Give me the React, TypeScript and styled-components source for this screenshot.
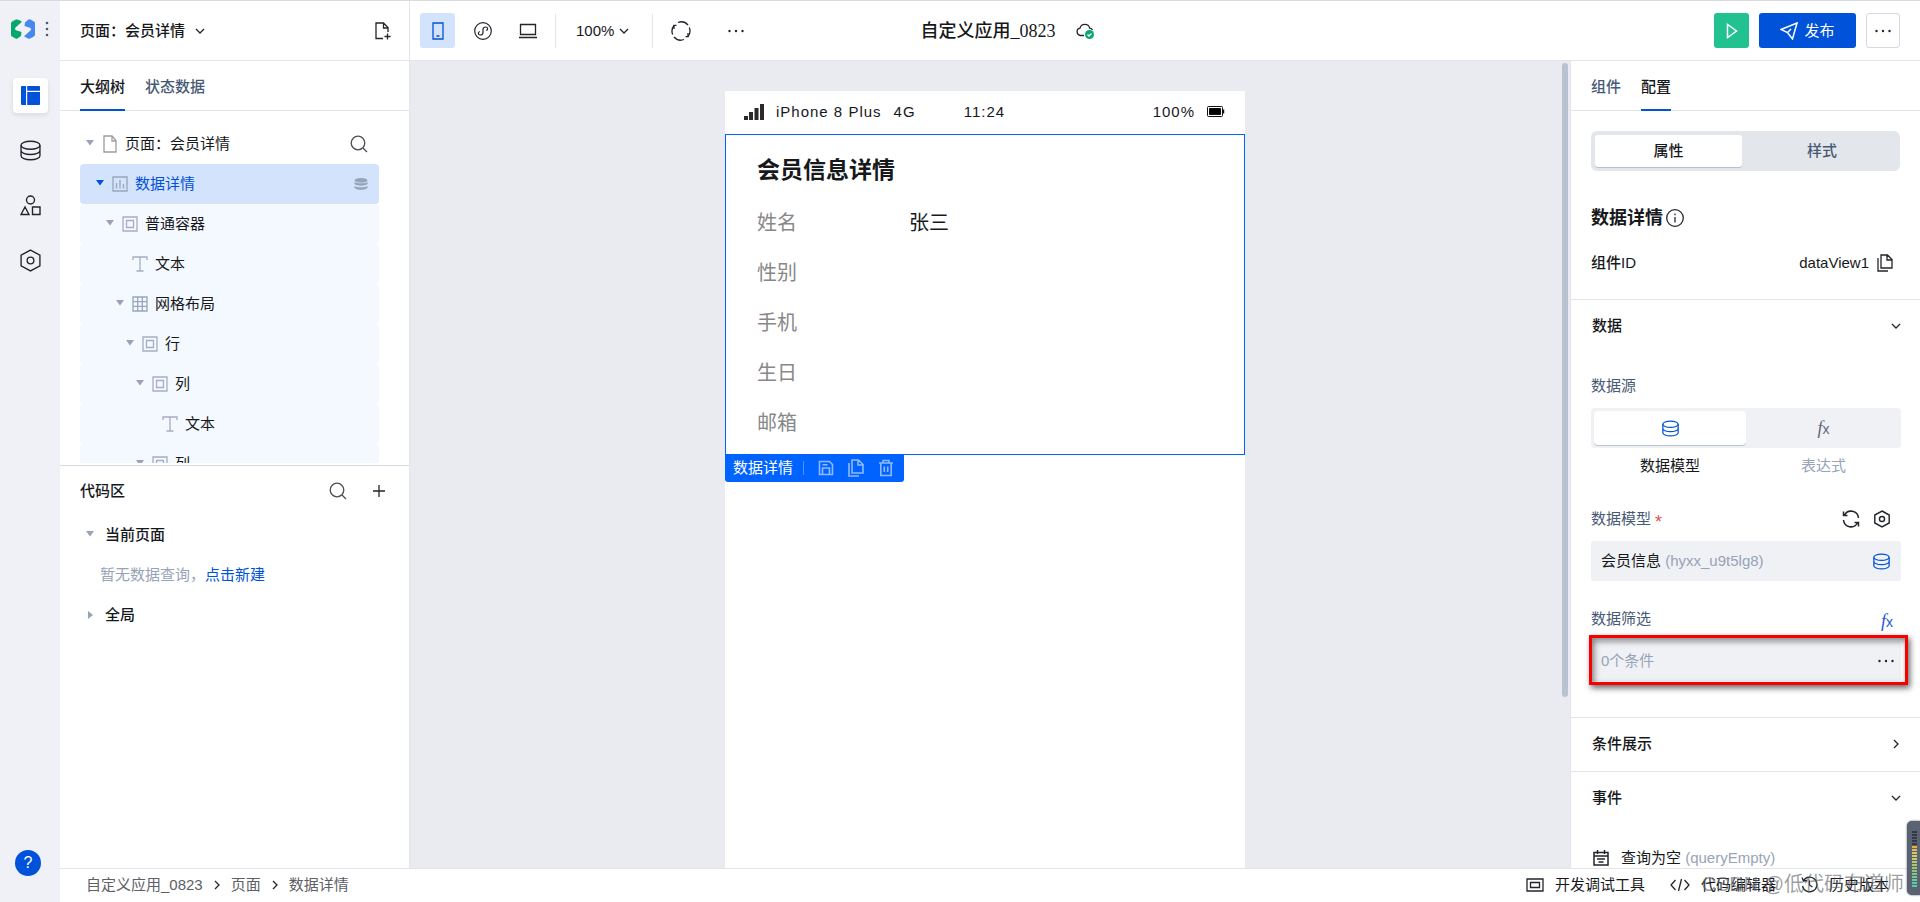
import React from "react";
import styled, { createGlobalStyle, css } from "styled-components";

const sans = `"Liberation Sans", "Noto Sans CJK SC", sans-serif`;
const c = {
  blue: "#0052d9",
  bright: "#0062ff",
  line: "#e2e5ea",
  text: "#16181c",
  slate: "#475a75",
  muted: "#97a3b7",
  field: "#f0f1f5",
  canvas: "#eaebf0",
};

const Global = createGlobalStyle`
  *, *::before, *::after { box-sizing: border-box; }
  body { margin: 0; font-family: ${sans}; font-size: 15px; line-height: 24px; color: ${c.text}; background: #fff; }
  button, select { font: inherit; color: inherit; border: 0; padding: 0; margin: 0; background: none; cursor: pointer; }
  h1, h2, h3, p, ul, ol, dl, dd, dt { margin: 0; padding: 0; list-style: none; font-size: inherit; font-weight: inherit; }
  svg { display: block; flex: none; }
`;

/* ---------- shell ---------- */
const Shell = styled.div`
  display: flex;
  height: 100vh;
  border-top: 1px solid #d9dade;
  overflow: hidden;
`;
const Rail = styled.nav`
  flex: none;
  width: 60px;
  background: #f0f1f6;
  display: flex;
  flex-direction: column;
  align-items: center;
  gap: 20px;
  padding-bottom: 26px;
`;
const Brand = styled.div`
  display: flex;
  align-items: center;
  gap: 10px;
  height: 37px;
  padding: 18px 0 0;
  margin-bottom: 20px;
`;
const RailButton = styled.button<{ $active?: boolean }>`
  width: 35px;
  height: 35px;
  display: grid;
  place-items: center;
  border-radius: 4px;
  ${(p) => p.$active && css`background: #fff; box-shadow: 0 2px 5px rgba(0, 20, 60, 0.1);`}
`;
const Help = styled.button`
  width: 26px;
  height: 26px;
  margin: auto auto 0 15px;
  border-radius: 50%;
  background: ${c.blue};
  color: #fff;
  font-size: 16px;
`;
const Main = styled.div`
  flex: 1;
  min-width: 0;
  display: flex;
  flex-direction: column;
`;
const Body = styled.div`
  flex: 1;
  min-height: 0;
  display: flex;
`;

/* ---------- header ---------- */
const Header = styled.header`
  flex: none;
  height: 60px;
  border-bottom: 1px solid ${c.line};
  display: grid;
  grid-template-columns: 1fr auto 1fr;
`;
const HeaderSide = styled.div`
  display: flex;
  align-items: stretch;
`;
const PageBar = styled.div`
  width: 350px;
  flex: none;
  padding: 0 18px 0 20px;
  display: flex;
  align-items: center;
  justify-content: space-between;
  border-right: 1px solid ${c.line};
`;
const Picker = styled.label<{ $bold?: boolean; $gap: number }>`
  display: flex;
  align-items: center;
  gap: ${(p) => p.$gap}px;
  font-weight: ${(p) => (p.$bold ? 500 : 400)};
  select { appearance: none; outline: 0; }
`;
const IconButton = styled.button`
  display: grid;
  place-items: center;
`;
const Tools = styled.div`
  display: flex;
  align-items: center;
  padding-left: 10px;
`;
const ToolButton = styled.button<{ $active?: boolean; $wide?: boolean }>`
  width: 35px;
  height: 35px;
  margin-right: ${(p) => (p.$wide ? 20 : 10)}px;
  display: grid;
  place-items: center;
  border-radius: 3px;
  background: ${(p) => (p.$active ? "#d4e3fc" : "transparent")};
`;
const Rule = styled.span<{ $before?: number; $after: number }>`
  width: 1px;
  height: 34px;
  margin: 0 ${(p) => p.$after}px 0 ${(p) => p.$before || 0}px;
  background: ${c.line};
`;
const AppTitle = styled.div`
  display: flex;
  align-items: center;
  gap: 20px;
  padding-left: 34px;
  h1 { font: 500 18px/24px "Liberation Serif", "Noto Sans CJK SC", serif; }
`;
const Actions = styled.div`
  flex: 1;
  display: flex;
  align-items: center;
  justify-content: flex-end;
  padding-right: 20px;
  gap: 10px;
`;
const ActionButton = styled.button<{ $kind: "run" | "publish" | "more" }>`
  height: 35px;
  display: flex;
  align-items: center;
  justify-content: center;
  gap: 6px;
  border-radius: 3px;
  color: #fff;
  ${(p) => p.$kind === "run" && css`width: 35px; background: #21c190;`}
  ${(p) => p.$kind === "publish" && css`width: 97px; background: ${c.blue};`}
  ${(p) => p.$kind === "more" && css`width: 34px; border: 1px solid #d6d9e3; color: ${c.text};`}
`;

/* ---------- shared ---------- */
const Tabs = styled.div`
  flex: none;
  height: 50px;
  padding-left: 20px;
  display: flex;
  gap: 20px;
  border-bottom: 1px solid ${c.line};
`;
const Tab = styled.button<{ $active?: boolean }>`
  height: 50px;
  padding-top: 4px;
  border-bottom: 2px solid ${(p) => (p.$active ? c.blue : "transparent")};
  color: ${(p) => (p.$active ? c.text : c.slate)};
  font-weight: 500;
`;

/* ---------- outline panel ---------- */
const LeftPanel = styled.aside`
  flex: none;
  width: 350px;
  border-right: 1px solid ${c.line};
  display: flex;
  flex-direction: column;
`;
const Tree = styled.ul`
  flex: none;
  height: 352px;
  overflow: hidden;
  padding: 13px 30px 0 20px;
`;
const TreeRow = styled.li<{ $level: number; $tone?: "selected" | "child" }>`
  height: 40px;
  padding: 0 11px 0 ${(p) => p.$level * 10}px;
  display: flex;
  align-items: center;
  border-radius: 4px;
  background: ${(p) => (p.$tone === "selected" ? "#d4e3fc" : p.$tone === "child" ? "#f4f8ff" : "none")};
  color: ${(p) => (p.$tone === "selected" ? c.blue : c.text)};
`;
const Slot = styled.span`
  width: 20px;
  height: 20px;
  flex: none;
  display: grid;
  place-items: center;
`;
const RowText = styled.span`
  flex: 1;
  padding-left: 5px;
`;
const CodeArea = styled.section`
  flex: 1;
  margin-top: 2px;
  padding: 0 21px 0 20px;
  border-top: 1px solid #d6d9e3;
`;
const CodeHead = styled.div`
  height: 49px;
  display: flex;
  align-items: center;
  gap: 23px;
  h2 { flex: 1; font-weight: 500; }
`;
const CodeRow = styled.div<{ $hint?: boolean }>`
  height: 40px;
  display: flex;
  align-items: center;
  font-weight: ${(p) => (p.$hint ? 400 : 500)};
  color: ${(p) => (p.$hint ? c.muted : c.text)};
  padding-left: ${(p) => (p.$hint ? 20 : 0)}px;
  a { color: ${c.blue}; text-decoration: none; }
`;

/* ---------- canvas ---------- */
const Canvas = styled.main`
  flex: 1;
  min-width: 0;
  display: flex;
  background: ${c.canvas};
`;
const Stage = styled.div`
  flex: 1;
  padding-top: 30px;
  display: flex;
  justify-content: center;
`;
const ScrollTrack = styled.div`
  width: 10px;
  padding: 2px;
`;
const ScrollThumb = styled.div`
  height: 79%;
  border-radius: 3px;
  background: #b9c2cf;
`;
const Phone = styled.div`
  width: 520px;
  background: #fff;
`;
const StatusBar = styled.div`
  height: 43px;
  padding: 0 20px 2px 19px;
  display: grid;
  grid-template-columns: 1fr auto 1fr;
  align-items: center;
  letter-spacing: 1px;
`;
const StatusGroup = styled.div<{ $end?: boolean }>`
  display: flex;
  align-items: center;
  gap: 12px;
  justify-content: ${(p) => (p.$end ? "flex-end" : "flex-start")};
`;
const DetailView = styled.section`
  position: relative;
  height: 321px;
  padding: 16px 31px 0;
  border: 1px solid ${c.bright};
  h2 { font-size: 23px; font-weight: 700; line-height: 38px; margin-bottom: 9px; }
`;
const DetailRow = styled.div`
  display: grid;
  grid-template-columns: 1fr 2fr;
  font-size: 20px;
  line-height: 50px;
  dt { color: #888; }
`;
const SelectionBar = styled.div`
  position: absolute;
  left: -1px;
  top: 100%;
  height: 28px;
  padding: 0 10px 1px 8px;
  display: flex;
  align-items: center;
  gap: 14px;
  border-radius: 0 0 3px 3px;
  background: ${c.bright};
  color: #fff;
  span { padding-right: 10px; border-right: 1px solid #4f93ff; line-height: 14px; }
`;

/* ---------- config panel ---------- */
const ConfigPanel = styled.aside`
  flex: none;
  width: 350px;
  border-left: 1px solid ${c.line};
  overflow: hidden;
  display: flex;
  flex-direction: column;
`;
const ConfigBlock = styled.div`
  flex: none;
  padding: 20px 20px 24px;
  border-bottom: 1px solid ${c.line};
`;
const ModeSwitch = styled.div`
  height: 40px;
  padding: 4px;
  display: grid;
  grid-template-columns: 147px 1fr;
  column-gap: 6px;
  border-radius: 6px;
  background: #e3e6ea;
`;
const ModeButton = styled.button<{ $active?: boolean }>`
  height: 32px;
  border-radius: 3px;
  font-weight: 500;
  color: ${(p) => (p.$active ? c.text : c.slate)};
  ${(p) => p.$active && css`background: #fff; box-shadow: 0 1px 0 #b9c2cf;`}
`;
const ComponentName = styled.h2`
  display: flex;
  align-items: center;
  gap: 3px;
  margin: 35px 0 21px;
  font-size: 18px;
  font-weight: 700;
`;
const Line = styled.div`
  display: flex;
  align-items: center;
  gap: 8px;
  padding-right: 7px;
  b { flex: 1; font-weight: 500; }
`;
const SectionHead = styled.button<{ $line?: boolean }>`
  flex: none;
  width: 100%;
  height: ${(p) => (p.$line ? 54 : 53)}px;
  padding: 0 19px 2px 21px;
  display: flex;
  align-items: center;
  justify-content: space-between;
  font-weight: 500;
  border-bottom: ${(p) => (p.$line ? 1 : 0)}px solid ${c.line};
`;
const Fields = styled.div`
  flex: none;
  padding: 21px 19px 36px 20px;
  border-bottom: 1px solid ${c.line};
`;
const LabelRow = styled.div<{ $top?: number; $end?: number }>`
  height: 24px;
  margin: ${(p) => p.$top || 0}px 0 10px;
  padding-right: ${(p) => p.$end || 0}px;
  display: flex;
  align-items: center;
  gap: 14px;
  color: ${c.slate};
  > span { flex: 1; }
  em { font-style: normal; font-size: 18px; line-height: 20px; vertical-align: -4px; color: #e34d59; padding-left: 4px; }
`;
const SourceSwitch = styled.div`
  display: grid;
  grid-template-columns: 1fr 1fr;
  row-gap: 6px;
  text-align: center;
`;
const SourceButton = styled.button<{ $active?: boolean }>`
  height: 40px;
  padding: 3px 0 3px ${(p) => (p.$active ? 3 : 0)}px;
  background: ${c.field};
  border-radius: ${(p) => (p.$active ? "4px 0 0 4px" : "0 4px 4px 0")};
  color: #5c697d;
  > span {
    height: 34px;
    display: grid;
    place-items: center;
    border-radius: 4px;
    ${(p) => p.$active && css`background: #fff; box-shadow: 0 1px 0 #b9c2cf;`}
  }
`;
const SourceText = styled.span<{ $active?: boolean }>`
  padding-left: ${(p) => (p.$active ? 3 : 0)}px;
  color: ${(p) => (p.$active ? c.text : c.muted)};
`;
const FieldButton = styled.button<{ $end: number }>`
  width: 100%;
  height: 40px;
  padding: 0 ${(p) => p.$end}px 0 10px;
  display: flex;
  align-items: center;
  justify-content: space-between;
  border-radius: 3px;
  background: ${c.field};
`;
const Muted = styled.span`
  color: ${c.muted};
`;
const Marked = styled.div`
  position: relative;
  &::after {
    content: "";
    position: absolute;
    inset: -6px -7px -4px -2px;
    border: 3px solid #f80000;
    box-shadow: 2px 3px 6px rgba(0, 0, 0, 0.6), inset 2px 3px 6px rgba(0, 0, 0, 0.5);
    pointer-events: none;
  }
`;
const EventRow = styled.div`
  flex: none;
  height: 40px;
  margin-top: 13px;
  padding-left: 22px;
  display: flex;
  align-items: center;
  gap: 12px;
`;
const FxText = styled.i<{ $blue?: boolean }>`
  font: italic 18px/20px "Liberation Serif", serif;
  padding-top: ${(p) => (p.$blue ? 4 : 0)}px;
  color: ${(p) => (p.$blue ? "#2a55d6" : "#5c697d")};
  small { font: 14px/20px "Liberation Sans", sans-serif; }
`;

/* ---------- footer ---------- */
const Footer = styled.footer`
  position: relative;
  flex: none;
  height: 34px;
  padding: 0 31px 2px 26px;
  display: flex;
  align-items: center;
  justify-content: space-between;
  border-top: 1px solid ${c.line};
`;
const Crumbs = styled.ol`
  display: flex;
  align-items: center;
  gap: 9px;
  color: #5d6066;
  li { display: flex; align-items: center; gap: 9px; }
`;
const FooterTools = styled.div`
  display: flex;
  gap: 25px;
`;
const FooterTool = styled.button`
  display: flex;
  align-items: center;
  gap: 11px;
`;
const Watermark = styled.span`
  position: absolute;
  right: 16px;
  top: 0;
  font: 20px/30px "Liberation Sans", "Noto Sans CJK SC", sans-serif;
  color: rgba(90, 93, 100, 0.6);
  pointer-events: none;
`;
const Meter = styled.div`
  position: fixed;
  right: 0;
  bottom: 7px;
  width: 13px;
  height: 74px;
  padding: 9px 3px 8px 5px;
  border-radius: 5px 0 0 5px;
  background: #5b6272;
  box-shadow: 0 0 2px #3b4150;
`;
const MeterBars = styled.div`
  height: 57px;
  background:
    repeating-linear-gradient(#5b6272 0 1px, transparent 1px 3px),
    linear-gradient(#343946 0 15px, #e9a93c 15px, #d5cf62 26px, #8fc374 40px, #4fd0b0 57px);
`;

/* ---------- icons ---------- */
type Ic = { size?: number; h?: number; box?: string; sw?: number; color?: string; children: React.ReactNode };
const Svg = ({ size = 20, h, box = "0 0 20 20", sw = 1.3, color = "#22252b", children }: Ic) => (
  <svg width={size} height={h || size} viewBox={box} fill="none" stroke={color} strokeWidth={sw} aria-hidden="true">
    {children}
  </svg>
);
const Database = ({ size = 20, color, sw }: { size?: number; color?: string; sw?: number }) => (
  <Svg size={size} color={color} sw={sw}>
    <ellipse cx="10" cy="5" rx="9" ry="3.800" />
    <path d="M1 5v10c0 2.100 4 3.800 9 3.800s9-1.700 9-3.800V5M1 10c0 2.100 4 3.800 9 3.800s9-1.700 9-3.800" />
  </Svg>
);
const Chevron = ({ dir = "down" }: { dir?: "down" | "right" }) => (
  <Svg size={10} box="0 0 10 10" sw={1.3}>
    <path d={dir === "down" ? "M1 3l4 4 4-4" : "M3 1l4 4-4 4"} />
  </Svg>
);
const Dots = () => (
  <Svg size={18} h={4} box="0 0 18 4">
    <g fill="#22252b" stroke="none">
      <circle cx="2.500" cy="2" r="1.200" /><circle cx="9" cy="2" r="1.200" /><circle cx="15.500" cy="2" r="1.200" />
    </g>
  </Svg>
);
const Caret = ({ color = "#96a3b8", right }: { color?: string; right?: boolean }) => (
  <svg width="8" height="8" viewBox="0 0 8 8" fill={color} aria-hidden="true">
    <path d={right ? "M2 0l5 4-5 4z" : "M0 0h8L4 5.500z"} />
  </svg>
);
const Search = () => (
  <Svg size={18} box="0 0 18 18" color="#4a4d53">
    <circle cx="8" cy="8" r="6.800" /><path d="M13 13l4 4" />
  </Svg>
);
const Copy = ({ color, sw }: { color?: string; sw?: number }) => (
  <Svg size={16} h={18} box="0 0 16 18" color={color} sw={sw}>
    <path d="M4 1h6.500L15 5.500V14H4zM10 1v5h5M1 4v13h10" />
  </Svg>
);
const Hexagon = ({ size }: { size: number }) => (
  <Svg size={size} h={size + 2} box="0 0 20 22" sw={size < 18 ? 1.8 : 1.3}>
    <path d="M10 1l9 5v10l-9 5-9-5V6z" /><circle cx="10" cy="11" r="3.200" />
  </Svg>
);
const Refresh = () => (
  <Svg size={20}>
    <path d="M7 1.500A9 9 0 0 1 17 4M18.300 6.500A9 9 0 0 1 17 15.500M13 18.500A9 9 0 0 1 3 16M1.700 13.500A9 9 0 0 1 3 4.500" />
    <path d="M3 8V4.300h2.500M17 12v3.700h-2.500" />
  </Svg>
);
const Reload = () => (
  <Svg size={18} box="0 0 18 18" sw={1.5}>
    <path d="M2.500 5A7.500 7.500 0 0 1 16.500 8M1.500 1.500V5.500H5.500M15.500 13A7.500 7.500 0 0 1 1.500 10M16.500 16.500V12.500H12.500" />
  </Svg>
);
const nodeIcons: Record<string, React.ReactNode> = {
  page: <Svg size={14} h={18} box="0 0 14 18" color="#9a9da3"><path d="M1 1h8l4 4.500V17H1zM9 1v5h4" /></Svg>,
  data: <Svg size={16} box="0 0 16 16" color="#98a5ba"><path d="M1 1h14v14H1zM4.500 12.500V7M8 12.500V4M11.500 12.500V8" /></Svg>,
  box: <Svg size={16} box="0 0 16 16" color="#a3aec2"><path d="M1 1h14v14H1zM4.500 4.500h7v7h-7z" /></Svg>,
  text: <Svg size={16} box="0 0 16 16" color="#a3aec2"><path d="M1 4V1h14v3M8 1v14M4.500 15h7" /></Svg>,
  grid: <Svg size={16} box="0 0 16 16" color="#98a5ba"><path d="M1 1h14v14H1zM5.700 1v14M10.300 1v14M1 5.700h14M1 10.300h14" /></Svg>,
};

const nodes: [number, string, string, boolean][] = [
  [1, "data", "数据详情", true],
  [2, "box", "普通容器", true],
  [3, "text", "文本", false],
  [3, "grid", "网格布局", true],
  [4, "box", "行", true],
  [5, "box", "列", true],
  [6, "text", "文本", false],
  [5, "box", "列", true],
];
const details: [string, string][] = [["姓名", "张三"], ["性别", ""], ["手机", ""], ["生日", ""], ["邮箱", ""]];

export default function App() {
  return (
    <>
      <Global />
      <Shell>
        <Rail>
          <Brand>
            <svg width="24" height="20" viewBox="0 0 24 20" aria-hidden="true">
              <path d="M0 4.500Q0 3 1.500 2.300L5 .6Q6.500 0 8 1L11 2.800 4.500 8.500Q3 10 5 11.200L10.500 13 10 17 6.500 19.500Q5.500 20 4.500 19.500L1 17.500Q0 17 0 16z" fill="#07a870" />
              <path d="M24 15.500Q24 17 22.500 17.700L19 19.400Q17.500 20 16 19L13 17.200 19.500 11.500Q21 10 19 8.800L13.500 7 14 3.500 17.500.5Q18.500 0 19.500.5L23 2.500Q24 3 24 4z" fill="#4787f0" />
            </svg>
            <svg width="4" height="16" viewBox="0 0 4 16" fill="#4b5a72" aria-hidden="true">
              <circle cx="2" cy="2" r="1.300" /><circle cx="2" cy="8" r="1.300" /><circle cx="2" cy="14" r="1.300" />
            </svg>
          </Brand>
          <RailButton $active aria-label="页面">
            <svg width="19" height="19" viewBox="0 0 19 19" fill={c.blue} aria-hidden="true">
              <path d="M1 0h4v19H1a1 1 0 0 1-1-1V1a1 1 0 0 1 1-1zM6.200 0H18a1 1 0 0 1 1 1v3.800H6.200zM6.200 6H19v12a1 1 0 0 1-1 1H6.200z" />
            </svg>
          </RailButton>
          <RailButton aria-label="数据源"><Database size={21} /></RailButton>
          <RailButton aria-label="组件">
            <Svg size={21} box="0 0 21 21" sw={1.4}>
              <circle cx="10.500" cy="5" r="4" /><path d="M1 19.500L5 12l4 7.500zM12.500 12h7.500v7.500h-7.500z" />
            </Svg>
          </RailButton>
          <RailButton aria-label="设置"><Hexagon size={21} /></RailButton>
          <Help aria-label="帮助">?</Help>
        </Rail>

        <Main>
          <Header>
            <HeaderSide>
              <PageBar>
                <Picker $bold $gap={9}>
                  <select aria-label="当前页面"><option>页面：会员详情</option></select>
                  <Chevron />
                </Picker>
                <IconButton aria-label="新建页面">
                  <Svg size={16} h={18} box="0 0 16 18">
                    <path d="M8 16.500H1V1h7.500L13 5.500V10M8.500 1v5H13M12.500 11.500v6M9.500 14.500h6" />
                  </Svg>
                </IconButton>
              </PageBar>
              <Tools>
                <ToolButton $active aria-label="手机">
                  <Svg size={12} h={18} box="0 0 12 18" color={c.blue}><path d="M1 1h10v16H1zM4.500 14h3" /></Svg>
                </ToolButton>
                <ToolButton aria-label="小程序">
                  <Svg size={18} box="0 0 18 18" sw={1.2}>
                    <circle cx="9" cy="9" r="8.300" />
                    <path d="M5.800 9.500c-2 .5-2 3.500.5 3.500 1.500 0 2.700-1 2.700-2.500v-3C9 6 10 5 11.700 5c2.500 0 2.500 3 .5 3.500" />
                  </Svg>
                </ToolButton>
                <ToolButton aria-label="桌面">
                  <Svg size={18} h={16} box="0 0 18 16"><path d="M1.500 1.500h15v10h-15zM0 14.500h18" /></Svg>
                </ToolButton>
                <Rule $after={20} />
                <Picker $gap={4}>
                  <select aria-label="缩放"><option>100%</option></select>
                  <Chevron />
                </Picker>
                <Rule $before={23} $after={10} />
                <ToolButton $wide aria-label="刷新"><Refresh /></ToolButton>
                <ToolButton aria-label="更多"><Dots /></ToolButton>
              </Tools>
            </HeaderSide>
            <AppTitle>
              <h1>自定义应用_0823</h1>
              <Svg size={18} h={16} box="0 0 18 16">
                <path d="M8 12.500H4.500a3.700 3.700 0 0 1-.5-7.300 5 5 0 0 1 9.700 0c1.300.2 2.300.8 2.900 1.800" />
                <circle cx="13.500" cy="11.500" r="4.500" fill="#07a870" stroke="none" />
                <path d="M11.500 11.500l1.500 1.500 2.500-2.500" stroke="#fff" />
              </Svg>
            </AppTitle>
            <Actions>
              <ActionButton $kind="run" aria-label="预览">
                <Svg size={12} h={16} box="0 0 12 16" color="#fff" sw={1.5}><path d="M1.500 1.500v13L10.500 8z" /></Svg>
              </ActionButton>
              <ActionButton $kind="publish">
                <Svg size={18} box="0 0 18 18" color="#fff" sw={1.5}><path d="M1 7.500L17 1l-4.500 16-5-6.500zM7.500 10.500L11 7" /></Svg>
                发布
              </ActionButton>
              <ActionButton $kind="more" aria-label="更多操作"><Dots /></ActionButton>
            </Actions>
          </Header>

          <Body>
            <LeftPanel>
              <Tabs>
                <Tab $active>大纲树</Tab>
                <Tab>状态数据</Tab>
              </Tabs>
              <Tree>
                <TreeRow $level={0}>
                  <Slot><Caret /></Slot>
                  <Slot>{nodeIcons.page}</Slot>
                  <RowText>页面：会员详情</RowText>
                  <IconButton aria-label="搜索"><Search /></IconButton>
                </TreeRow>
                {nodes.map(([level, icon, label, open], i) => (
                  <TreeRow key={i} $level={level} $tone={i === 0 ? "selected" : "child"}>
                    <Slot>{open && <Caret color={i === 0 ? c.blue : undefined} />}</Slot>
                    <Slot>{nodeIcons[icon]}</Slot>
                    <RowText>{label}</RowText>
                    {i === 0 && (
                      <svg width="14" height="12" viewBox="0 0 14 12" fill="#96a3b8" aria-hidden="true">
                        <ellipse cx="7" cy="2.300" rx="6.500" ry="2.300" />
                        <path d="M.5 4c2 1.800 11 1.800 13 0v2c-2 2.300-11 2.300-13 0zM.5 8c2 1.800 11 1.800 13 0v1.700c-2 2.800-11 2.800-13 0z" />
                      </svg>
                    )}
                  </TreeRow>
                ))}
              </Tree>
              <CodeArea>
                <CodeHead>
                  <h2>代码区</h2>
                  <IconButton aria-label="搜索代码"><Search /></IconButton>
                  <IconButton aria-label="新建">
                    <Svg size={18} box="0 0 18 18"><path d="M9 3v12M3 9h12" /></Svg>
                  </IconButton>
                </CodeHead>
                <CodeRow><Slot><Caret /></Slot><RowText>当前页面</RowText></CodeRow>
                <CodeRow $hint>暂无数据查询，<a href="#new">点击新建</a></CodeRow>
                <CodeRow><Slot><Caret right /></Slot><RowText>全局</RowText></CodeRow>
              </CodeArea>
            </LeftPanel>

            <Canvas>
              <Stage>
                <Phone>
                  <StatusBar>
                    <StatusGroup>
                      <svg width="20" height="16" viewBox="0 0 20 16" fill="#2b2b2b" aria-hidden="true">
                        <path d="M0 12h4v4H0zM5 8h4v8H5zM10.500 4h4v12h-4zM16 0h4v16h-4z" />
                      </svg>
                      <span>iPhone 8 Plus</span><span>4G</span>
                    </StatusGroup>
                    <span>11:24</span>
                    <StatusGroup $end>
                      <span>100%</span>
                      <svg width="18" height="11" viewBox="0 0 18 11" fill="none" stroke="#111" aria-hidden="true">
                        <rect x=".5" y=".5" width="15" height="10" rx="1" /><path d="M2.500 2.500h11v6h-11z" fill="#000" /><path d="M16.500 3.500v4" strokeWidth="1.500" />
                      </svg>
                    </StatusGroup>
                  </StatusBar>
                  <DetailView>
                    <h2>会员信息详情</h2>
                    <dl>
                      {details.map(([k, v]) => (
                        <DetailRow key={k}><dt>{k}</dt><dd>{v}</dd></DetailRow>
                      ))}
                    </dl>
                    <SelectionBar>
                      <span>数据详情</span>
                      <IconButton aria-label="保存">
                        <Svg size={16} box="0 0 16 16" color="#8fbaff" sw={1.6}>
                          <path d="M1.500 1.500h10l3 3v10h-13zM4.500 14V8h7v6M4.500 4.800h5" />
                        </Svg>
                      </IconButton>
                      <IconButton aria-label="复制"><Copy color="#8fbaff" sw={1.6} /></IconButton>
                      <IconButton aria-label="删除">
                        <Svg size={16} h={18} box="0 0 16 18" color="#8fbaff" sw={1.6}>
                          <path d="M1 4h14M5 4V1.500h6V4M2.800 4v12.500h10.400V4M6.300 7.500v5.500M9.700 7.500v5.500" />
                        </Svg>
                      </IconButton>
                    </SelectionBar>
                  </DetailView>
                </Phone>
              </Stage>
              <ScrollTrack><ScrollThumb /></ScrollTrack>
            </Canvas>

            <ConfigPanel>
              <Tabs>
                <Tab>组件</Tab>
                <Tab $active>配置</Tab>
              </Tabs>
              <ConfigBlock>
                <ModeSwitch>
                  <ModeButton $active>属性</ModeButton>
                  <ModeButton>样式</ModeButton>
                </ModeSwitch>
                <ComponentName>
                  数据详情
                  <Svg size={18} box="0 0 18 18"><circle cx="9" cy="9" r="8.300" /><path d="M9 8v5.500M9 4.500v1.700" /></Svg>
                </ComponentName>
                <Line>
                  <b>组件ID</b>
                  <span>dataView1</span>
                  <IconButton aria-label="复制ID"><Copy /></IconButton>
                </Line>
              </ConfigBlock>
              <SectionHead>数据<Chevron /></SectionHead>
              <Fields>
                <LabelRow><span>数据源</span></LabelRow>
                <SourceSwitch>
                  <SourceButton $active aria-label="数据模型"><span><Database size={17} color={c.blue} sw={1.5} /></span></SourceButton>
                  <SourceButton aria-label="表达式"><span><FxText>f<small>x</small></FxText></span></SourceButton>
                  <SourceText $active>数据模型</SourceText>
                  <SourceText>表达式</SourceText>
                </SourceSwitch>
                <LabelRow $top={29} $end={11}>
                  <span>数据模型<em>*</em></span>
                  <IconButton aria-label="刷新模型"><Reload /></IconButton>
                  <IconButton aria-label="模型设置"><Hexagon size={16} /></IconButton>
                </LabelRow>
                <FieldButton $end={11}>
                  <span>会员信息 <Muted>(hyxx_u9t5lg8)</Muted></span>
                  <Database size={17} color={c.blue} sw={1.5} />
                </FieldButton>
                <LabelRow $top={26} $end={8}>
                  <span>数据筛选</span>
                  <IconButton aria-label="表达式筛选"><FxText $blue>f<small>x</small></FxText></IconButton>
                </LabelRow>
                <Marked>
                  <FieldButton $end={6}><Muted>0个条件</Muted><Dots /></FieldButton>
                </Marked>
              </Fields>
              <SectionHead $line>条件展示<Chevron dir="right" /></SectionHead>
              <SectionHead>事件<Chevron /></SectionHead>
              <EventRow>
                <Svg size={16} box="0 0 16 16" sw={1.5}><path d="M1 2.500h14V15H1zM4.500 0v4M11.500 0v4M1 6h14M4 9h8M5.500 12h5" /></Svg>
                <span>查询为空 <Muted>(queryEmpty)</Muted></span>
              </EventRow>
            </ConfigPanel>
          </Body>

          <Footer>
            <Crumbs>
              <li>自定义应用_0823<Chevron dir="right" /></li>
              <li>页面<Chevron dir="right" /></li>
              <li>数据详情</li>
            </Crumbs>
            <FooterTools>
              <FooterTool>
                <Svg size={18} h={14} box="0 0 18 14"><path d="M1 1h16v12H1zM4.500 4.500h9v5h-9z" /></Svg>
                开发调试工具
              </FooterTool>
              <FooterTool>
                <Svg size={20} h={14} box="0 0 20 14"><path d="M5.500 2L1 7l4.500 5M14.500 2L19 7l-4.500 5M11.500 1L8.500 13" /></Svg>
                代码编辑器
              </FooterTool>
              <FooterTool>
                <Svg size={17} box="0 0 17 17"><path d="M2.500 4.500A7.300 7.300 0 1 1 1.500 10M1 1.500l1.500 3.500 3.500-.5M8.500 4.500v4.500l3 2" /></Svg>
                历史版本
              </FooterTool>
            </FooterTools>
            <Watermark>CSDN @低代码布道师</Watermark>
          </Footer>
        </Main>
        <Meter><MeterBars /></Meter>
      </Shell>
    </>
  );
}
